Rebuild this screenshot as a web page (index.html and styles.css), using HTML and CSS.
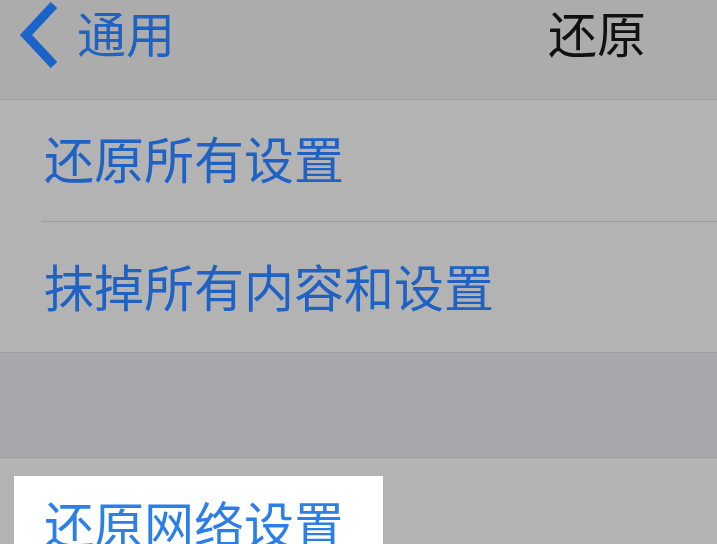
FILE: index.html
```html
<!DOCTYPE html>
<html lang="zh-CN">
<head>
    <meta charset="UTF-8">
    <meta name="viewport" content="width=device-width, initial-scale=1.0">
    <title>还原</title>
    <link rel="stylesheet" href="styles.css">
</head>
<body>
    <div class="screen">
        <!-- 导航栏 -->
        <div class="navbar">
            <div class="back">
                <svg class="chevron" width="42" height="66" viewBox="0 0 42 66">
                    <polyline points="36,3 8,33 36,63" fill="none" stroke="#1b63c6" stroke-width="9" stroke-linejoin="miter"/>
                </svg>
                <span class="back-label">通用</span>
            </div>
            <div class="title">还原</div>
        </div>

        <div class="group">
            <div class="cell first">还原所有设置</div>
            <div class="separator"></div>
            <div class="cell second">抹掉所有内容和设置</div>
        </div>

        <div class="gap"></div>

        <div class="group bottom">
            <div class="highlight">还原网络设置</div>
        </div>
    </div>
</body>
</html>
```

FILE: styles.css
```css
:root {
    --nav-bg: #acacac;
    --cell-bg: #b3b3b3;
    --gap-bg: #a8a8ac;
    --line: #9c9c9e;
    --dim-blue: #1f62c3;
    --blue: #2d7fe8;
}

body {
    margin: 0;
    font-family: "Noto Sans CJK SC", "Noto Sans", sans-serif;
    background: var(--cell-bg);
    overflow: hidden;
}

.screen {
    width: 717px;
    height: 544px;
    overflow: hidden;
}

.navbar {
    height: 99px;
    background: var(--nav-bg);
    border-bottom: 1px solid var(--line);
    display: flex;
    align-items: flex-start;
    justify-content: space-between;
}

.back {
    display: flex;
    align-items: flex-start;
    padding-left: 18px;
}

.chevron {
    display: block;
    margin-top: 2px;
}

.back-label {
    font-size: 49px;
    line-height: 63px;
    color: var(--dim-blue);
    margin-left: 17px;
}

.title {
    font-size: 49px;
    line-height: 63px;
    margin-right: 71px;
    color: #111;
}

.group {
    background: var(--cell-bg);
}

.cell {
    font-size: 50px;
    color: var(--dim-blue);
    padding-left: 44px;
    display: flex;
    align-items: center;
    box-sizing: border-box;
}

.cell.first {
    height: 121px;
    padding-bottom: 8px;
}

.cell.second {
    height: 130px;
    padding-bottom: 5px;
}

.separator {
    height: 1px;
    margin-left: 42px;
    background: var(--line);
}

.gap {
    height: 104px;
    background: var(--gap-bg);
    border-top: 1px solid var(--line);
    border-bottom: 1px solid var(--line);
}

.bottom {
    padding: 18px 0 0 14px;
    height: 100px;
}

.highlight {
    width: 339px;
    height: 100px;
    background: #fff;
    padding-left: 30px;
    padding-top: 11px;
    font-size: 50px;
    line-height: 70px;
    color: var(--blue);
}
```
